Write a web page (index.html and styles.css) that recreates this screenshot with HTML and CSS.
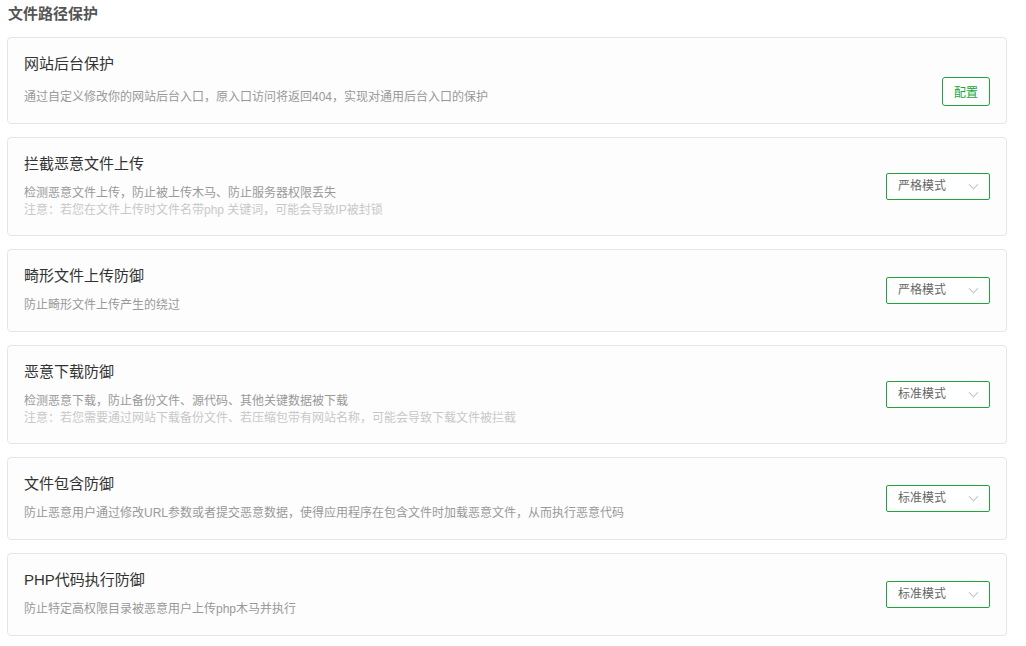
FILE: index.html
```html
<!DOCTYPE html>
<html lang="zh-CN">
<head>
    <meta charset="UTF-8">
    <title>文件路径保护</title>
    <link rel="stylesheet" href="styles.css">
</head>
<body>
    <div class="page">
        <h3 class="section-title">文件路径保护</h3>

        <div class="card card-bottom">
            <div class="info">
                <div class="title">网站后台保护</div>
                <div class="desc">通过自定义修改你的网站后台入口，原入口访问将返回404，实现对通用后台入口的保护</div>
            </div>
            <button class="btn">配置</button>
        </div>

        <div class="card">
            <div class="info">
                <div class="title">拦截恶意文件上传</div>
                <div class="desc">检测恶意文件上传，防止被上传木马、防止服务器权限丢失</div>
                <div class="note">注意：若您在文件上传时文件名带php 关键词，可能会导致IP被封锁</div>
            </div>
            <div class="select">严格模式<span class="arrow"></span></div>
        </div>

        <div class="card">
            <div class="info">
                <div class="title">畸形文件上传防御</div>
                <div class="desc">防止畸形文件上传产生的绕过</div>
            </div>
            <div class="select">严格模式<span class="arrow"></span></div>
        </div>

        <div class="card">
            <div class="info">
                <div class="title">恶意下载防御</div>
                <div class="desc">检测恶意下载，防止备份文件、源代码、其他关键数据被下载</div>
                <div class="note">注意：若您需要通过网站下载备份文件、若压缩包带有网站名称，可能会导致下载文件被拦截</div>
            </div>
            <div class="select">标准模式<span class="arrow"></span></div>
        </div>

        <div class="card">
            <div class="info">
                <div class="title">文件包含防御</div>
                <div class="desc">防止恶意用户通过修改URL参数或者提交恶意数据，使得应用程序在包含文件时加载恶意文件，从而执行恶意代码</div>
            </div>
            <div class="select">标准模式<span class="arrow"></span></div>
        </div>

        <div class="card">
            <div class="info">
                <div class="title">PHP代码执行防御</div>
                <div class="desc">防止特定高权限目录被恶意用户上传php木马并执行</div>
            </div>
            <div class="select">标准模式<span class="arrow"></span></div>
        </div>
    </div>
</body>
</html>
```

FILE: styles.css
```css
* {
    margin: 0;
    padding: 0;
    box-sizing: border-box;
}

body {
    background: #fff;
    font-family: "Liberation Sans", "Noto Sans CJK SC", sans-serif;
    color: #333;
}

.page {
    width: 1007px;
    padding: 4px 0 0 7px;
}

.section-title {
    font-size: 15px;
    font-weight: bold;
    color: #555;
    line-height: 20px;
    margin: 0 0 13px 1px;
}

.card {
    display: flex;
    align-items: center;
    justify-content: space-between;
    border: 1px solid #e5e5e5;
    border-radius: 4px;
    background: #fdfdfd;
    padding: 16px 16px 17px 16px;
    margin-bottom: 13px;
}

.card-bottom {
    align-items: flex-end;
}

.title {
    font-size: 15px;
    line-height: 20px;
    color: #333;
    margin-bottom: 11px;
}

.card-bottom .title {
    margin-bottom: 15px;
}

.desc {
    font-size: 12px;
    line-height: 17px;
    color: #999;
}

.note {
    font-size: 12px;
    line-height: 16px;
    color: #c8c8c8;
}

.btn {
    width: 48px;
    height: 29px;
    border: 1px solid #20a53a;
    border-radius: 3px;
    background: #fff;
    color: #20a53a;
    font-size: 12px;
    font-family: inherit;
    cursor: pointer;
}

.select {
    position: relative;
    width: 104px;
    height: 27px;
    border: 1px solid #20a53a;
    border-radius: 2px;
    background: #fff;
    font-size: 12px;
    line-height: 25px;
    color: #666;
    padding-left: 11px;
}

.arrow {
    position: absolute;
    right: 12px;
    top: 7px;
    width: 7px;
    height: 7px;
    border-right: 1px solid #c4c4c4;
    border-bottom: 1px solid #c4c4c4;
    transform: rotate(45deg);
}
```
